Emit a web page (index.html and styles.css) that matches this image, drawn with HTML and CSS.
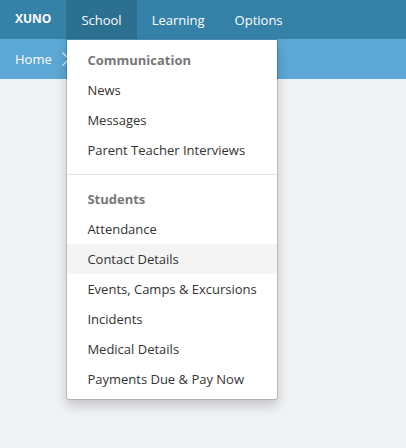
FILE: index.html
```html
<!DOCTYPE html>
<html lang="en">
<head>
  <meta charset="UTF-8">
  <meta name="viewport" content="width=device-width, initial-scale=1.0">
  <title>XUNO</title>
  <link rel="stylesheet" href="styles.css">
</head>
<body>
  <nav class="navbar">
    <a class="brand" href="#">XUNO</a>
    <ul class="nav">
      <li class="dropdown open">
        <a href="#">School</a>
        <!-- School menu -->
        <ul class="dropdown-menu">
          <li class="dropdown-header">Communication</li>
          <li><a href="#">News</a></li>
          <li><a href="#">Messages</a></li>
          <li><a href="#">Parent Teacher Interviews</a></li>
          <li class="divider"></li>
          <li class="dropdown-header">Students</li>
          <li><a href="#">Attendance</a></li>
          <li class="active"><a href="#">Contact Details</a></li>
          <li><a href="#">Events, Camps &amp; Excursions</a></li>
          <li><a href="#">Incidents</a></li>
          <li><a href="#">Medical Details</a></li>
          <li><a href="#">Payments Due &amp; Pay Now</a></li>
        </ul>
      </li>
      <li><a href="#">Learning</a></li>
      <li><a href="#">Options</a></li>
    </ul>
  </nav>

  <div class="breadcrumb">
    <a href="#">Home</a>
    <svg class="chevron" width="8" height="14" viewBox="0 0 8 14" aria-hidden="true">
      <path d="M0.5 0.5 L7 7 L0.5 13.5" fill="none" stroke="#e4f1f9" stroke-width="1.3"/>
    </svg>
  </div>
</body>
</html>
```
FILE: styles.css
```css
body {
  font-family: "Open Sans", Arial, sans-serif;
  font-size: 13px;
  line-height: 20px;
  margin: 0;
  min-height: 100vh;
  background: #f1f2f4;
  color: #333;
}

a {
  color: inherit;
  text-decoration: none;
}

ul {
  list-style: none;
  margin: 0;
  padding: 0;
}

.navbar {
  display: flex;
  background: #3581a8;
  color: #fff;
}

.brand {
  padding: 9px 15px 10px;
  font-size: 12px;
  font-weight: bold;
}

.nav {
  display: flex;
}

.nav > li > a {
  display: block;
  padding: 10px 15px 9px;
}

.nav > .open > a {
  background: #2b6f91;
}

.dropdown {
  position: relative;
}

.dropdown-menu {
  position: absolute;
  top: 100%;
  left: 0;
  min-width: 160px;
  padding: 5px 0;
  background: #fff;
  background-clip: padding-box;
  border: 1px solid rgba(0, 0, 0, 0.15);
  border-radius: 0 0 4px 4px;
  box-shadow: 0 6px 12px rgba(0, 0, 0, 0.18);
  color: #333;
  white-space: nowrap;
}

.dropdown-menu > li > a,
.dropdown-header {
  display: block;
  padding: 5px 20px;
}

.dropdown-header {
  color: #777;
  font-weight: bold;
}

.dropdown-menu > .active > a,
.dropdown-menu > li > a:hover {
  background: #f4f4f4;
}

.divider {
  height: 1px;
  margin: 9px 0;
  background: #e5e5e5;
}

.breadcrumb {
  display: flex;
  align-items: center;
  gap: 10px;
  padding: 10px 15px;
  background: #5ba8d6;
  color: #fff;
}
```
